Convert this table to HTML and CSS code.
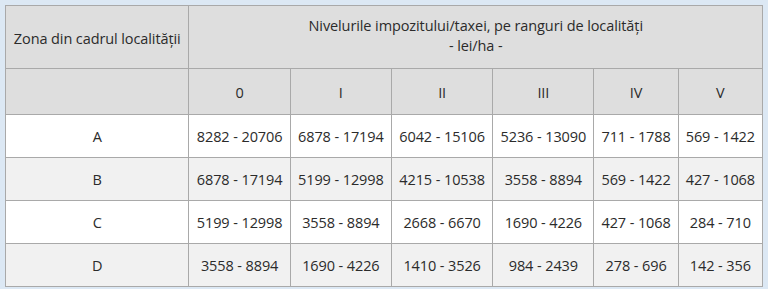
FILE: index.html
```html
<!DOCTYPE html>
<html lang="ro">
<head>
<meta charset="utf-8">
<title>Niveluri impozit</title>
<link rel="stylesheet" href="styles.css">
</head>
<body>
<table class="tax">
  <colgroup>
    <col class="c-zone"><col class="c-mid"><col class="c-mid"><col class="c-mid"><col class="c-mid"><col class="c-sm"><col class="c-sm">
  </colgroup>
  <thead>
    <tr class="h1">
      <th class="zone-head">Zona din cadrul localităţii</th>
      <th colspan="6" class="level-head">Nivelurile impozitului/taxei, pe ranguri de localităţi<br>- lei/ha -</th>
    </tr>
    <tr class="h2">
      <th></th><th>0</th><th>I</th><th>II</th><th>III</th><th>IV</th><th>V</th>
    </tr>
  </thead>
  <tbody>
    <tr><td>A</td><td>8282 - 20706</td><td>6878 - 17194</td><td>6042 - 15106</td><td>5236 - 13090</td><td>711 - 1788</td><td>569 - 1422</td></tr>
    <tr class="alt"><td>B</td><td>6878 - 17194</td><td>5199 - 12998</td><td>4215 - 10538</td><td>3558 - 8894</td><td>569 - 1422</td><td>427 - 1068</td></tr>
    <tr><td>C</td><td>5199 - 12998</td><td>3558 - 8894</td><td>2668 - 6670</td><td>1690 - 4226</td><td>427 - 1068</td><td>284 - 710</td></tr>
    <tr class="alt"><td>D</td><td>3558 - 8894</td><td>1690 - 4226</td><td>1410 - 3526</td><td>984 - 2439</td><td>278 - 696</td><td>142 - 356</td></tr>
  </tbody>
</table>
</body>
</html>
```
FILE: styles.css
```css
html, body {
  margin: 0;
  background: #dce8f4;
}
body {
  padding: 5px 0 0 5px;
  font-family: "Open Sans", "Noto Sans", sans-serif;
  font-size: 14.5px;
  color: #2b2b2b;
}
.tax {
  border-collapse: collapse;
  table-layout: fixed;
  width: 758px;
  background: #fff;
}
.c-zone { width: 183px; }
.c-mid { width: 101px; }
.c-sm { width: 84px; }
.tax th, .tax td {
  border: 1px solid #a9a9a9;
  text-align: center;
  padding: 0;
  font-weight: normal;
  white-space: nowrap;
  letter-spacing: -0.1px;
}
.tax thead th {
  background: #dedede;
}
.h1 th { height: 62px; line-height: 20px; }
.h1 th.level-head { padding-bottom: 3px; height: 59px; }
.h1 th.zone-head { padding-top: 4px; height: 58px; }
.h2 th { height: 43px; padding-top: 2px; }
.tax td { height: 42px; }
.alt td { background: #f1f1f1; }
```
